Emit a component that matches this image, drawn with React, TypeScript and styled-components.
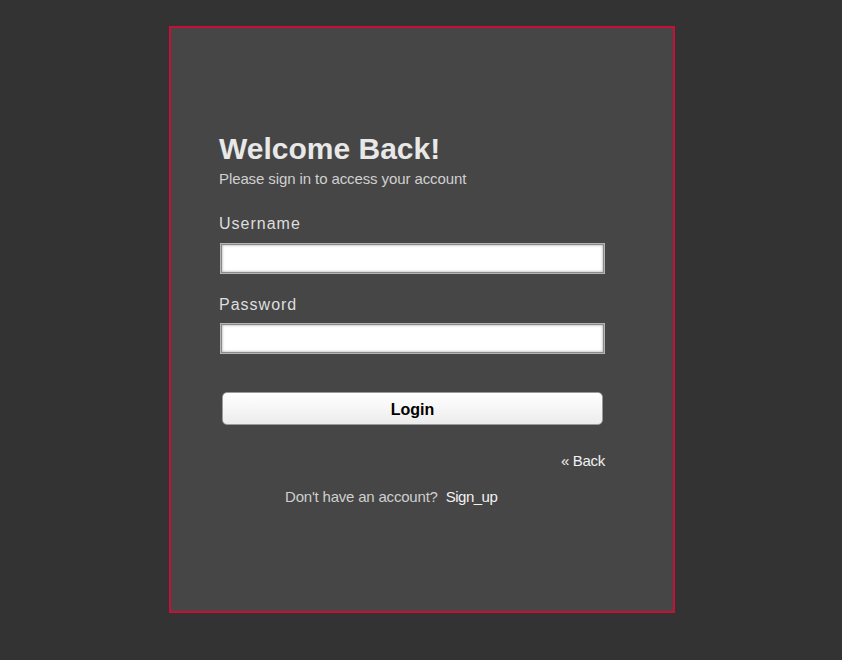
import React from "react";
import styled, { createGlobalStyle } from "styled-components";

const GlobalStyle = createGlobalStyle`
  html, body {
    margin: 0;
    padding: 0;
    background: #333333;
    font-family: "Liberation Sans", Arial, Helvetica, sans-serif;
  }
`;

const Page = styled.div`
  min-height: 660px;
  box-sizing: border-box;
  padding: 26px 0 0 169px;
`;

const Card = styled.div`
  width: 506px;
  height: 587px;
  box-sizing: border-box;
  background: #464646;
  border: 2px solid #c80f38;
  padding: 104px 67px 0 48px;
`;

const Title = styled.h1`
  margin: 0;
  font-size: 30px;
  line-height: 34px;
  font-weight: bold;
  color: #e8e8e8;
`;

const Subtitle = styled.p`
  margin: 4px 0 0;
  font-size: 15px;
  line-height: 18px;
  letter-spacing: -0.1px;
  color: #d0d0d0;
`;

const Label = styled.label<{ $gap: number }>`
  display: block;
  margin-top: ${(p) => p.$gap}px;
  font-size: 16px;
  line-height: 20px;
  letter-spacing: 1px;
  color: #dedede;
`;

const Input = styled.input<{ $gap: number }>`
  display: block;
  box-sizing: border-box;
  margin: ${(p) => p.$gap}px 0 0 1px;
  width: 385px;
  height: 31px;
  background: #fff;
  border: 1px solid #b4b4b4;
  box-shadow: inset 0 0 0 1px #8a8a8a, inset 0 0 3px 1px #a0a0a0;
  outline: none;
  padding: 0 6px;
  font-size: 15px;
`;

const Button = styled.button`
  display: block;
  box-sizing: border-box;
  margin: 38px 0 0 3px;
  width: 381px;
  height: 33px;
  border: 1px solid #9a9a9a;
  border-radius: 5px;
  background: linear-gradient(#ffffff, #f6f6f6 50%, #ececec);
  font-family: "Liberation Sans", Arial, sans-serif;
  font-size: 16px;
  font-weight: bold;
  color: #000;
  padding: 2px 0 0;
  cursor: pointer;
`;

const BackRow = styled.div`
  margin-top: 27px;
  padding-right: 1px;
  text-align: right;
  font-size: 15px;
  line-height: 18px;
  letter-spacing: -0.3px;
`;

const LightLink = styled.a`
  color: #f2f2f2;
  text-decoration: none;
`;

const SignupRow = styled.p`
  margin: 18px 0 0 66px;
  font-size: 15px;
  line-height: 18px;
  letter-spacing: -0.2px;
  color: #cfcfcf;
`;

const SignupLink = styled(LightLink)`
  margin-left: 4px;
  letter-spacing: -0.5px;
`;

export default function App() {
  return (
    <>
      <GlobalStyle />
      <Page>
        <Card>
          <Title>Welcome Back!</Title>
          <Subtitle>Please sign in to access your account</Subtitle>
          <Label $gap={26} htmlFor="username">Username</Label>
          <Input $gap={9} id="username" type="text" />
          <Label $gap={21} htmlFor="password">Password</Label>
          <Input $gap={8} id="password" type="password" />
          <Button type="button">Login</Button>
          <BackRow>
            <LightLink href="#">« Back</LightLink>
          </BackRow>
          <SignupRow>
            Don't have an account? <SignupLink href="#">Sign_up</SignupLink>
          </SignupRow>
        </Card>
      </Page>
    </>
  );
}
